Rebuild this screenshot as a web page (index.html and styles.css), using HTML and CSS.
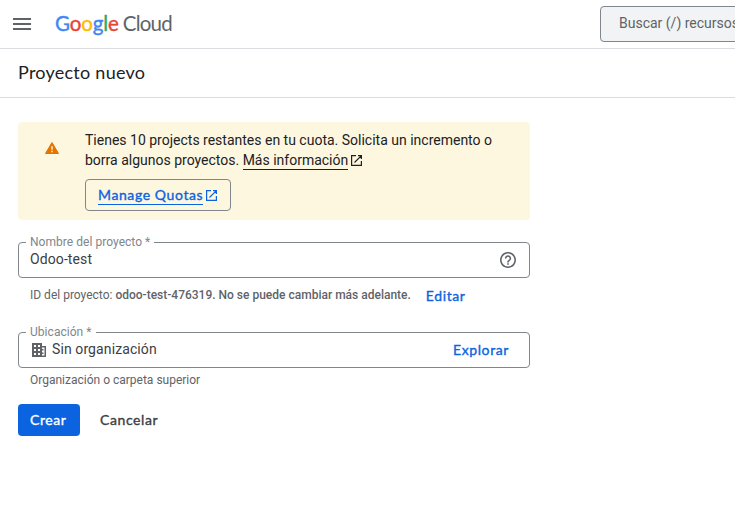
FILE: index.html
```html
<!DOCTYPE html>
<html lang="es">
<head>
<meta charset="utf-8">
<title>Proyecto nuevo</title>
<link rel="stylesheet" href="styles.css">
</head>
<body>
<header class="topbar">
  <svg class="menu" width="18" height="12" viewBox="0 0 18 12"><path d="M0 0h18v2H0zM0 5h18v2H0zM0 10h18v2H0z" fill="#5f6368"/></svg>
  <div class="logo"><span class="word"><span class="b">G</span><span class="r">o</span><span class="y">o</span><span class="b">g</span><span class="g">l</span><span class="r">e</span></span><span class="cloud">Cloud</span></div>
  <div class="search"><span>Buscar (/) recursos</span></div>
</header>
<div class="titlebar"><h1>Proyecto nuevo</h1></div>
<main>
  <section class="banner">
    <svg class="warn" width="14" height="12" viewBox="0 0 14 12"><path d="M7 .5L13.500 11.500H.5z" fill="#e37400" stroke="#e37400" stroke-linejoin="round"/><path d="M6.3 4.2h1.4v3.6H6.3zM6.3 8.8h1.4v1.4H6.3z" fill="#fef7e0"/></svg>
    <div class="message">
      <p>Tienes 10 projects restantes en tu cuota. Solicita un incremento o<br>borra algunos proyectos. <a class="more">Más información</a><svg class="ext" width="11" height="11" viewBox="0 0 11 11"><path fill="none" stroke="currentColor" stroke-width="1.2" d="M5 .6H.6v9.800h9.800V6M7 .6h3.400V4M10.400.6L3.500 7.500"/></svg></p>
      <a class="quota"><span>Manage Quotas</span><svg width="11" height="11" viewBox="0 0 11 11"><path fill="none" stroke="currentColor" stroke-width="1.2" d="M5 .6H.6v9.800h9.800V6M7 .6h3.400V4M10.400.6L3.500 7.500"/></svg></a>
    </div>
  </section>
  <div class="field name">
    <label>Nombre del proyecto *</label>
    <span class="value">Odoo-test</span>
    <svg class="help" width="16" height="16" viewBox="2 2 20 20"><path fill="#5f6368" d="M11 18h2v-2h-2v2zm1-16C6.48 2 2 6.48 2 12s4.480 10 10 10 10-4.480 10-10S17.520 2 12 2zm0 18c-4.410 0-8-3.590-8-8s3.590-8 8-8 8 3.590 8 8-3.590 8-8 8zm0-14c-2.210 0-4 1.790-4 4h2c0-1.100.9-2 2-2s2 .9 2 2c0 2-3 1.750-3 5h2c0-2.250 3-2.500 3-5 0-2.210-1.790-4-4-4z"/></svg>
  </div>
  <div class="hint"><span>ID del proyecto: <b>odoo-test-476319. No se puede cambiar más adelante.</b></span><a class="edit">Editar</a></div>
  <div class="field place">
    <label>Ubicación *</label>
    <svg class="org" width="14" height="14" viewBox="0 0 14 14"><path fill="#5f6368" fill-rule="evenodd" d="M0 0h10v3h4v11H0zM2 2v2h2V2zM6 2v2h2V2zM2 6v2h2V6zM6 6v2h2V6zM2 10v2h2v-2zM6 10v2h2v-2zM10 4.500v8h2.500v-8z"/><path fill="#5f6368" d="M10 6h1.500v1.500H10zM10 9.500h1.500V11H10z"/></svg>
    <span class="value">Sin organización</span>
    <a class="browse">Explorar</a>
  </div>
  <div class="caption">Organización o carpeta superior</div>
  <div class="actions"><button class="create">Crear</button><button class="cancel">Cancelar</button></div>
</main>
</body>
</html>
```
FILE: styles.css
```css
* { box-sizing: border-box; }
body { margin: 0; height: 509px; overflow: hidden; background: #fff; color: #202124; font: 14px/20px Roboto, sans-serif; }
svg { display: block; flex: none; }
.topbar { display: flex; align-items: center; height: 49px; border-bottom: 1px solid #dadce0; padding-left: 13px; overflow: hidden; }
.logo { display: flex; margin: -3px 0 0 24px; width: 545px; flex: none; font: 20.5px/24px Lato, sans-serif; white-space: nowrap; }
.word { -webkit-text-stroke: .4px; letter-spacing: -.1px; }
.cloud { margin-left: 4px; color: #5f6368; letter-spacing: -.8px; }
.b { color: #4285f4; } .r { color: #ea4335; } .y { color: #fbbc04; } .g { color: #34a853; }
.search { flex: none; width: 500px; height: 36px; border: 1px solid #80868b; border-radius: 4px; background: #f1f3f4; color: #5f6368; padding: 6px 18px; line-height: 20px; white-space: nowrap; }
.titlebar { height: 49px; border-bottom: 1px solid #dadce0; padding: 11px 18px; }
h1 { margin: 0; font: 18px/24px Lato, sans-serif; letter-spacing: .25px; }
main { width: 530px; padding: 24px 0 0 18px; }
.banner { display: flex; height: 98px; padding: 8px 0 0 27px; border-radius: 4px; background: #fef7e0; }
.warn { margin-top: 12px; }
.message { margin-left: 26px; white-space: nowrap; }
p { margin: 0; }
.more { display: inline-block; line-height: 18px; border-bottom: 1px solid #202124; }
.ext { display: inline-block; margin-left: 3px; vertical-align: -1px; }
.quota, .edit, .browse, button { font: 14px/20px Lato, sans-serif; -webkit-text-stroke: .35px; letter-spacing: .6px; }
.quota { display: inline-flex; align-items: center; width: 146px; height: 32px; margin-top: 9px; padding-left: 12px; border: 1px solid #80868b; border-radius: 4px; color: #0b63df; line-height: 18px; }
.quota span { border-bottom: 1px solid; }
.quota svg { margin-left: 3px; }
.field { position: relative; display: flex; align-items: center; height: 36px; border: 1px solid #80868b; border-radius: 4px; padding: 0 13px 0 11px; }
.name { margin-top: 22px; }
.field label { position: absolute; top: -9px; left: 7px; padding: 0 4px; background: #fff; color: #80868b; font-size: 12px; line-height: 16px; letter-spacing: .04px; white-space: nowrap; }
.value { color: #3c4043; letter-spacing: .1px; position: relative; top: -1px; }
.help { margin-left: auto; }
.hint { display: flex; height: 54px; padding: 8px 0 0 12px; font-size: 12px; line-height: 18px; color: #5f6368; white-space: nowrap; }
.hint b { font-weight: 500; }
.edit, .browse { color: #0b63df; }
.edit { margin-left: 15px; }
.org { margin: 0 6px 0 2px; }
.browse { margin-left: auto; margin-right: 7px; }
.caption { padding: 4px 12px 0; height: 36px; color: #5f6368; font-size: 12px; line-height: 16px; }
.actions { display: flex; }
button { height: 32px; border: 0; border-radius: 4px; padding: 0; background: none; color: #3c4043; text-align: left; }
.create { width: 62px; background: #0b63df; color: #fff; padding-left: 12px; }
.cancel { margin-left: 20px; }
```
